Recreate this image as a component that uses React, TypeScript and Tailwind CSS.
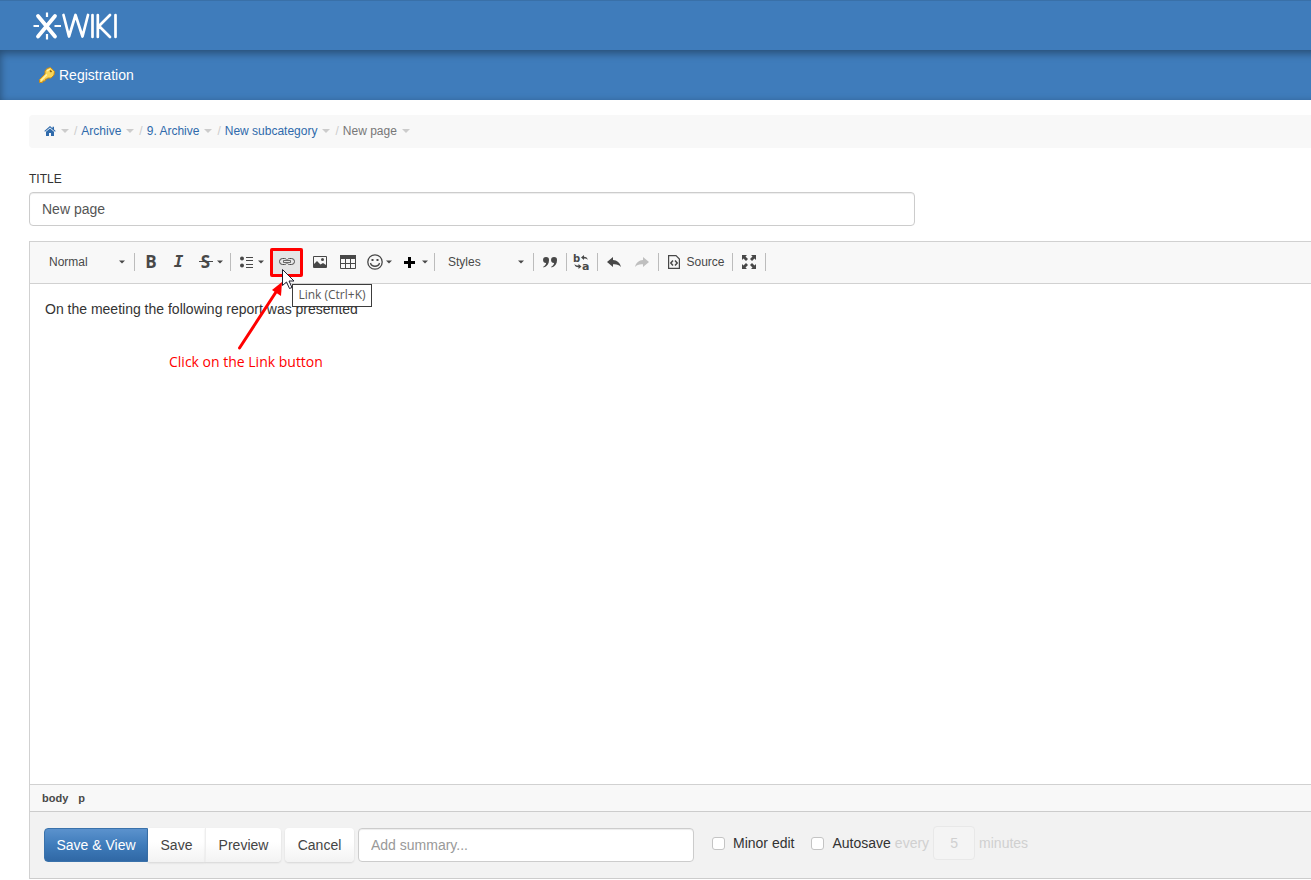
import type { ReactNode } from "react";
import { clsx } from "clsx";

const crumbs = ["Archive", "9. Archive", "New subcategory"];

function Caret({ className }: { className?: string }) {
  return (
    <svg viewBox="0 0 6 4" className={clsx("h-[4px] w-[6px] shrink-0", className)} aria-hidden="true">
      <path d="M0 0.5h6L3 3.5z" fill="currentColor" />
    </svg>
  );
}

function CrumbCaret() {
  return (
    <button type="button" aria-label="Show siblings" className="ml-[5px] text-[#ccc]">
      <svg viewBox="0 0 8 4" className="h-1 w-2" aria-hidden="true">
        <path d="M0 0h8L4 4z" fill="currentColor" />
      </svg>
    </button>
  );
}

function Logo() {
  return (
    <svg viewBox="0 0 86 28" className="h-7 w-[86px]" fill="none" stroke="#fff" strokeLinecap="round" role="img" aria-label="XWiki">
      <g strokeWidth="3.800">
        <path d="M6 4l17 20.500M23 4L6 24.500" />
      </g>
      <g strokeWidth="2.200" strokeLinecap="butt">
        <path d="M1.500 14h5.500M22.500 14h6.500M15 .5v4.500M15 22v5.500" />
      </g>
      <g strokeWidth="2.700" strokeLinejoin="round">
        <path d="M31.500 3l5.500 21.500L43.500 3l7 21.500L56 3M60.500 3v22M65.800 3v22M78 3L67 14l11 11M83.500 3v22" />
      </g>
    </svg>
  );
}

function KeyIcon() {
  return (
    <svg viewBox="0 0 16 16" className="h-4 w-4" aria-hidden="true">
      <path
        d="M8 1.500L11.500 .5 15.500 4.500 15 8 12 11 8.500 11 8 12 6.500 12 6 14 4 14 3.500 15.500 .5 15.500 .5 12.500 6 7 6 4z"
        fill="#f9d658"
        stroke="#c98a1b"
      />
      <path d="M2 13.500l6-6M8 4l3-2" stroke="#fff3b0" strokeWidth="1.200" />
      <path d="M11 3.500l1.500 1.500" stroke="#8a5c10" strokeWidth="1.600" />
    </svg>
  );
}

function HomeIcon() {
  return (
    <svg viewBox="0 0 12 10" className="h-[10px] w-3" fill="#2f6aab" aria-hidden="true">
      <path d="M6 0L.3 5l.7.7L6 1.500l5 4.200.7-.7L10 3.500V.7H8.500v1.500z" />
      <path d="M6 2.500L2 5.800V10h3V7h2v3h3V5.800z" />
    </svg>
  );
}

function ListIcon() {
  return (
    <svg viewBox="0 0 16 16" className="h-4 w-4" fill="#484848" aria-hidden="true">
      <circle cx="3" cy="4.500" r="2" />
      <circle cx="3" cy="11.500" r="2" />
      <path d="M7 3h7v1H7zM7 6h7v1H7zM7 10h7v1H7zM7 13h7v1H7z" />
    </svg>
  );
}

function LinkIcon() {
  return (
    <svg viewBox="0 0 16 16" className="h-4 w-4" fill="none" stroke="#484848" aria-hidden="true">
      <path d="M7.500 5.500C7 4.800 6.200 4.500 5.500 4.500h-2a3 3 0 0 0 0 6h2c.8 0 1.500-.3 2-1M8.500 5.500c.5-.7 1.300-1 2-1h2a3 3 0 0 1 0 6h-2c-.8 0-1.500-.3-2-1" />
      <path d="M4.500 6.500h7v2h-7z" strokeWidth=".8" />
    </svg>
  );
}

function ImageIcon() {
  return (
    <svg viewBox="0 0 16 16" className="h-4 w-4" aria-hidden="true">
      <path d="M1.500 2.500h13v11h-13z" fill="none" stroke="#484848" />
      <circle cx="10.500" cy="5.500" r="1.500" fill="#484848" />
      <path d="M2 13V10l3-3 3.500 3.500L11 9l3 2v2z" fill="#484848" />
    </svg>
  );
}

function TableIcon() {
  return (
    <svg viewBox="0 0 16 16" className="h-4 w-4" aria-hidden="true">
      <path d="M.5 1.500h15v13H.5zM.5 9.500h15M5.500 5v9.500M10.500 5v9.500" fill="none" stroke="#484848" />
      <path d="M0 1h16v4H0z" fill="#484848" />
    </svg>
  );
}

function SmileyIcon() {
  return (
    <svg viewBox="0 0 16 16" className="h-4 w-4" aria-hidden="true">
      <circle cx="8" cy="8" r="7.200" fill="none" stroke="#484848" strokeWidth="1.300" />
      <path d="M4.500 5h2v2h-2zM9.500 5h2v2h-2z" fill="#484848" />
      <path d="M3.500 9c1 4.300 8 4.300 9 0" fill="none" stroke="#484848" strokeWidth="1.300" />
    </svg>
  );
}

function PlusIcon() {
  return (
    <svg viewBox="0 0 16 16" className="h-4 w-4" aria-hidden="true">
      <path d="M5 3h3v4h4v3H8v4H5v-4H1V7h4z" fill="#000" />
    </svg>
  );
}

function QuoteIcon() {
  return (
    <svg viewBox="0 0 16 16" className="h-4 w-4" fill="#484848" aria-hidden="true">
      <path d="M4 3a3 3 0 0 1 3 3.200C7 9.500 5.200 12.500 1.500 13.500l-.3-.8c1.800-.9 2.800-2.200 2.900-3.700A3 3 0 1 1 4 3z" />
      <path d="M12 3a3 3 0 0 1 3 3.200c0 3.300-1.800 6.300-5.500 7.300l-.3-.8c1.800-.9 2.800-2.200 2.900-3.700A3 3 0 1 1 12 3z" />
    </svg>
  );
}

function ReplaceIcon() {
  return (
    <svg viewBox="0 0 20 20" className="h-5 w-5" fill="#484848" aria-hidden="true">
      <text x="1" y="10" fontSize="10" fontWeight="700" fontFamily="DejaVu Sans">b</text>
      <text x="10" y="18" fontSize="11" fontWeight="700" fontFamily="DejaVu Sans">a</text>
      <path d="M9 5.500l3-2.500v1.800c2.200 0 3.500 1 3.700 3.200-.8-1.200-1.700-1.500-3.700-1.500V8zM9.500 14.500l-3 2.500v-1.800c-2.500 0-3.700-1-4-3.200 1 1.200 2 1.500 4 1.500V12z" />
    </svg>
  );
}

function UndoIcon({ flipped }: { flipped?: boolean }) {
  return (
    <svg viewBox="0 0 16 16" className={clsx("h-4 w-4", flipped ? "text-[#bfbfbf]" : "text-[#484848]")} aria-hidden="true">
      <path
        d={
          flipped
            ? "M15 8L9 3v3C5 6.300 2 8.500 1 13c2-2.300 4.500-3 8-2.700V13z"
            : "M1 8l6-5v3c4 .3 7 2.500 8 7-2-2.300-4.500-3-8-2.700V13z"
        }
        fill="currentColor"
      />
    </svg>
  );
}

function SourceIcon() {
  return (
    <svg viewBox="0 0 12 14" className="h-[14px] w-3" fill="none" stroke="#484848" aria-hidden="true">
      <path d="M.6 .6h7.400l3.400 3.400v9.400H.6z" strokeWidth="1.200" />
      <path d="M5 5.500L2.800 8 5 10.500M7 5.500L9.200 8 7 10.500" strokeWidth="1.500" />
    </svg>
  );
}

function MaximizeIcon() {
  return (
    <svg viewBox="0 0 16 16" className="h-4 w-4" aria-hidden="true">
      <path
        d="M1 1h5L4.500 2.500 7 5 5 7 2.500 4.500 1 6zM15 1v5l-1.500-1.500L11 7 9 5l2.500-2.500L10 1zM1 15v-5l1.500 1.500L5 9l2 2-2.500 2.500L6 15zM15 15h-5l1.500-1.500L9 11l2-2 2.500 2.500L15 10z"
        fill="#484848"
      />
    </svg>
  );
}

function Separator() {
  return <span className="h-[18px] w-px shrink-0 bg-[#bcbcbc]" />;
}

function ToolButton({ label, className, menu, children }: { label: string; className: string; menu?: boolean; children: ReactNode }) {
  return (
    <button type="button" aria-label={label} className={clsx("flex h-7 shrink-0 items-center justify-center text-[#484848]", className)}>
      {children}
      {menu && <Caret className="ml-[3px]" />}
    </button>
  );
}

function Combo({ label, className }: { label: string; className: string }) {
  return (
    <div className="relative flex shrink-0 items-center">
      <select aria-label={label} className={clsx("h-7 appearance-none text-xs text-[#484848]", className)}>
        <option>{label}</option>
      </select>
      <Caret className="pointer-events-none absolute right-[9px] text-[#484848]" />
    </div>
  );
}

function Toolbar() {
  return (
    <div className="flex h-[42px] items-center border-b border-[#d1d1d1] bg-[#f8f8f8] pb-[2px] pl-[11px]">
      <Combo label="Normal" className="w-[93px] pl-2" />
      <Separator />
      <div className="flex px-[2px]">
        <ToolButton label="Bold" className="w-7">
          <span className="font-['Open_Sans',sans-serif] text-[17px] leading-4 font-bold">B</span>
        </ToolButton>
        <ToolButton label="Italic" className="w-[27px]">
          <span className="font-['DejaVu_Sans_Mono',monospace] text-base leading-4 font-bold italic">I</span>
        </ToolButton>
        <ToolButton label="Strikethrough" className="w-9" menu>
          <span className="mx-px w-[14px] bg-[linear-gradient(#484848,#484848)] bg-[length:100%_1px] bg-center bg-no-repeat text-center font-['Open_Sans',sans-serif] text-[17px] leading-4 font-bold">
            S
          </span>
        </ToolButton>
      </div>
      <Separator />
      <div className="flex px-[2px]">
        <ToolButton label="Lists" className="w-9" menu>
          <ListIcon />
        </ToolButton>
      </div>
      <div className="relative flex">
        <ToolButton label="Link" className="w-8 bg-[#e5e5e5]">
          <LinkIcon />
        </ToolButton>
        <Annotation />
      </div>
      <div className="flex pr-px pl-[3px]">
        <ToolButton label="Image" className="w-7">
          <ImageIcon />
        </ToolButton>
        <ToolButton label="Table" className="w-[27px]">
          <TableIcon />
        </ToolButton>
        <ToolButton label="Emoji" className="w-9" menu>
          <SmileyIcon />
        </ToolButton>
        <ToolButton label="Insert" className="w-9" menu>
          <PlusIcon />
        </ToolButton>
      </div>
      <Separator />
      <Combo label="Styles" className="w-[98px] pl-[13px]" />
      <Separator />
      <ToolButton label="Block quote" className="w-8">
        <QuoteIcon />
      </ToolButton>
      <Separator />
      <ToolButton label="Replace" className="w-[30px]">
        <ReplaceIcon />
      </ToolButton>
      <Separator />
      <div className="flex px-[2px]">
        <ToolButton label="Undo" className="w-7">
          <UndoIcon />
        </ToolButton>
        <ToolButton label="Redo" className="w-7">
          <UndoIcon flipped />
        </ToolButton>
      </div>
      <Separator />
      <ToolButton label="Source" className="w-[73px] gap-[6px] pl-[2px]">
        <SourceIcon />
        <span className="text-xs">Source</span>
      </ToolButton>
      <Separator />
      <ToolButton label="Maximize" className="w-8">
        <MaximizeIcon />
      </ToolButton>
      <Separator />
    </div>
  );
}

// Red help marks, the pointer and the tooltip, all lying over the editor
function Annotation() {
  return (
    <div className="pointer-events-none absolute top-0 left-0 z-10">
      <div className="absolute top-0 -left-px h-[29px] w-[33px] rounded-xs border-3 border-[#f00]" />
      <svg viewBox="0 0 60 90" className="absolute top-5 -left-9 h-[90px] w-[60px] max-w-none" aria-hidden="true">
        <path d="M4.500 80L41 24" stroke="#f00" strokeWidth="3" strokeLinecap="round" />
        <path d="M47 14L46 28 37 22z" fill="#f00" />
        <path d="M47.500 1.500v16l4-3.500 3 6.500 2.500-1-3-6.500h5z" fill="#fff" stroke="#1c1c2c" />
      </svg>
      <div className="absolute top-9 left-[21px] flex h-[23px] w-20 items-center justify-center border border-[#3c3c3c] bg-white font-['Open_Sans',sans-serif] text-xs whitespace-nowrap text-[#575757]">
        Link (Ctrl+K)
      </div>
      <div className="absolute top-[105px] -left-[102px] font-['Open_Sans',sans-serif] text-sm leading-[18px] whitespace-nowrap text-[#f00]">
        Click on the Link button
      </div>
    </div>
  );
}

function ActionBar() {
  const plain = "h-[34px] bg-linear-to-b from-white from-40% to-[#f3f3f3] text-[#444] shadow-[0_1px_2px_rgba(0,0,0,0.12)]";
  const checkbox = "mt-px h-[13px] w-[13px] appearance-none rounded-[3px] border border-[#c4c4c4] bg-white";
  return (
    <div className="flex h-[68px] items-center border-y border-[#ccc] bg-[#f2f2f2] pb-px pl-[14px]">
      <div className="flex">
        <button type="button" className="h-[34px] w-[104px] rounded-l border border-[#3a72ab] bg-linear-to-b from-[#5b92cd] via-[#3f7cbb] to-[#3068a5] text-white">
          Save &amp; View
        </button>
        <button type="button" className={clsx(plain, "w-[57px]")}>Save</button>
        <button type="button" className={clsx(plain, "w-[76px] rounded-r border-l border-[#eee]")}>Preview</button>
      </div>
      <button type="button" className={clsx(plain, "ml-1 w-[69px] rounded")}>Cancel</button>
      <input
        type="text"
        aria-label="Summary"
        placeholder="Add summary..."
        className="ml-1 h-[34px] w-[336px] rounded border border-[#ccc] bg-white px-3 shadow-[inset_0_1px_1px_rgba(0,0,0,0.075)] placeholder:text-[#999]"
      />
      <div className="mb-1 flex items-center text-[#333]">
        <label className="ml-[18px] flex items-center gap-2">
          <input type="checkbox" className={checkbox} />
          Minor edit
        </label>
        <label className="ml-[17px] flex items-center gap-2">
          <input type="checkbox" className={checkbox} />
          Autosave
        </label>
        <label className="ml-1 flex items-center gap-1 text-[#d0d0d0]">
          every
          <input type="text" defaultValue="5" disabled className="h-[34px] w-[42px] rounded border border-[#e8e8e8] bg-[#f4f4f4] text-center" />
          minutes
        </label>
      </div>
    </div>
  );
}

export default function App() {
  return (
    <div className="min-h-screen overflow-x-hidden bg-white font-['Liberation_Sans',Arial,sans-serif] text-sm text-[#333]">
      <header className="flex h-[50px] items-center border-t border-[#3970a8] bg-[#3f7cbb] pl-8">
        <a href="#home">
          <Logo />
        </a>
      </header>
      <nav className="-mr-5 flex h-[50px] items-center bg-[#3f7cbb] pl-[39px] shadow-[inset_0_3px_9px_rgba(0,0,0,0.4)]">
        <a href="#registration" className="flex items-center gap-1 text-white">
          <KeyIcon />
          Registration
        </a>
      </nav>

      <main className="pt-[15px] pl-[29px]">
        <ol className="flex h-[33px] items-center rounded-l bg-[#f8f8f8] pb-[2px] pl-[15px] text-xs text-[#777]">
          <li className="flex items-center">
            <a href="#root" aria-label="Home">
              <HomeIcon />
            </a>
            <CrumbCaret />
          </li>
          {crumbs.map((crumb) => (
            <li key={crumb} className="flex items-center">
              <span className="mr-[4px] ml-[5px] text-[#ccc]">/</span>
              <a href="#page" className="text-[#2f6aab]">{crumb}</a>
              <CrumbCaret />
            </li>
          ))}
          <li className="flex items-center">
            <span className="mr-[4px] ml-[5px] text-[#ccc]">/</span>
            New page
            <CrumbCaret />
          </li>
        </ol>

        <label htmlFor="title" className="mt-[22px] block text-xs leading-[18px] font-medium">
          TITLE
        </label>
        <input
          id="title"
          type="text"
          defaultValue="New page"
          className="mt-1 block h-[34px] w-full max-w-[886px] rounded border border-[#ccc] px-3 text-[#555] shadow-[inset_0_1px_1px_rgba(0,0,0,0.075)]"
        />

        <section className="mt-[15px] border-t border-l border-[#d1d1d1]">
          <Toolbar />
          <div className="min-h-[500px] px-[15px] pt-[15px]">
            <p className="leading-5">On the meeting the following report was presented</p>
          </div>
          <div className="flex h-[27px] items-center gap-[10px] border-t border-[#d1d1d1] bg-[#f8f8f8] pt-px pl-3 text-[11px] font-bold text-[#484848]">
            <span>body</span>
            <span>p</span>
          </div>
          <ActionBar />
        </section>
      </main>
    </div>
  );
}
